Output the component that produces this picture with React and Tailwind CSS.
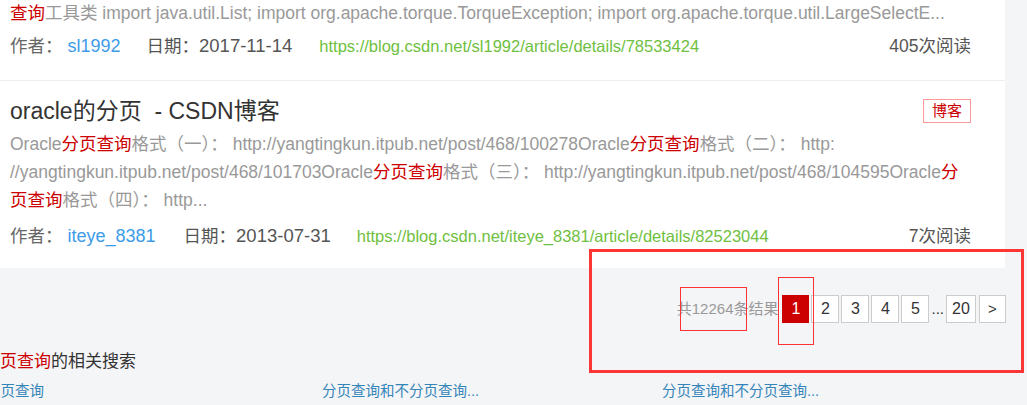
const font = { fontFamily: '"Liberation Sans", "Noto Sans CJK SC", sans-serif' };

function Hl({ children }) {
  return <span className="text-[#cc0000]">{children}</span>;
}

function Meta({ author, date, url, reads, authorGap, dateGap }) {
  return (
    <div className="flex items-center h-[28px] text-[17.5px]">
      <span className="text-[#666]">作者：</span>
      <span className={`text-[#3d9be9] text-[18px] ml-[5px] ${authorGap}`}>{author}</span>
      <span className="text-[#555]">
        日期：<span className="text-[18.5px]">{date}</span>
      </span>
      <span className={`text-[#6fbf40] text-[16.5px] ${dateGap}`}>{url}</span>
      <span className="ml-auto text-[#555]">{reads}</span>
    </div>
  );
}

const pages = ["2", "3", "4", "5"];

export default function App() {
  return (
    <div className="relative w-[1027px] h-[405px] overflow-hidden bg-[#f4f5f7]" style={font}>
      <div className="w-[1005px] bg-white">
        <div className="pl-[10px] pr-[34px] pb-[20px] border-b border-[#eee]">
          <div className="h-[28px] leading-[28px] -mt-px text-[17.5px] text-[#999] whitespace-nowrap">
            <Hl>查询</Hl>工具类 import java.util.List; import org.apache.torque.TorqueException; import org.apache.torque.util.LargeSelectE...
          </div>
          <div className="mt-[5px]">
            <Meta
              author="sl1992"
              date="2017-11-14"
              url="https://blog.csdn.net/sl1992/article/details/78533424"
              reads="405次阅读"
              authorGap="mr-[26px]"
              dateGap="ml-[27px]"
            />
          </div>
        </div>
        <div className="pl-[10px] pr-[34px] pt-[15px] pb-[18px]">
          <div className="flex items-center justify-between h-[30px]">
            <span className="text-[23px] text-[#333]">oracle的分页&nbsp; - CSDN博客</span>
            <span className="w-[48px] h-[24px] flex items-center justify-center border border-[#f99] text-[15px] text-[#cc0000]">
              博客
            </span>
          </div>
          <div className="mt-[4px] text-[17.5px] text-[#999] leading-[28px] whitespace-nowrap">
            <div>
              Oracle<Hl>分页查询</Hl>格式（一）： http://yangtingkun.itpub.net/post/468/100278Oracle<Hl>分页查询</Hl>格式（二）： http:
            </div>
            <div>
              //yangtingkun.itpub.net/post/468/101703Oracle<Hl>分页查询</Hl>格式（三）： http://yangtingkun.itpub.net/post/468/104595Oracle<Hl>分</Hl>
            </div>
            <div>
              <Hl>页查询</Hl>格式（四）： http...
            </div>
          </div>
          <div className="mt-[8px]">
            <Meta
              author="iteye_8381"
              date="2013-07-31"
              url="https://blog.csdn.net/iteye_8381/article/details/82523044"
              reads="7次阅读"
              authorGap="mr-[28px]"
              dateGap="ml-[26px]"
            />
          </div>
        </div>
      </div>

      <div className="w-[1006px] flex items-center justify-end mt-[27px] h-[28px] text-[15px]">
        <span className="text-[#999] mr-[4px]">共12264条结果</span>
        <span className="w-[27px] h-[28px] flex items-center justify-center bg-[#c00] text-white text-[16px]">1</span>
        {pages.map((p) => (
          <span
            key={p}
            className="ml-[2px] w-[28px] h-[28px] flex items-center justify-center bg-white border border-[#ccc] text-[#333] text-[16px]"
          >
            {p}
          </span>
        ))}
        <span className="mx-[2px] text-[#333]">...</span>
        <span className="w-[30px] h-[28px] flex items-center justify-center bg-white border border-[#ccc] text-[#333] text-[16px]">20</span>
        <span className="ml-[3px] w-[27px] h-[28px] flex items-center justify-center bg-white border border-[#ccc] text-[#333]">&gt;</span>
      </div>

      <div className="mt-[26px] -ml-[17px] text-[17px] text-[#333] leading-[26px]">
        <Hl>分页查询</Hl>的相关搜索
      </div>
      <div className="-ml-[14px] flex text-[14.5px] text-[#3384b9] leading-[20px] mt-[6px]">
        <span className="w-[336px]">分页查询</span>
        <span className="w-[340px]">分页查询和不分页查询...</span>
        <span className="w-[340px]">分页查询和不分页查询...</span>
      </div>

      <div className="absolute left-[589px] top-[249px] w-[435px] h-[124px] border-[3px] border-[#fc3535]" />
      <div className="absolute left-[680px] top-[287px] w-[67px] h-[44px] border border-[#f33]" />
      <div className="absolute left-[778px] top-[277px] w-[36px] h-[68px] border border-[#f33]" />
    </div>
  );
}
